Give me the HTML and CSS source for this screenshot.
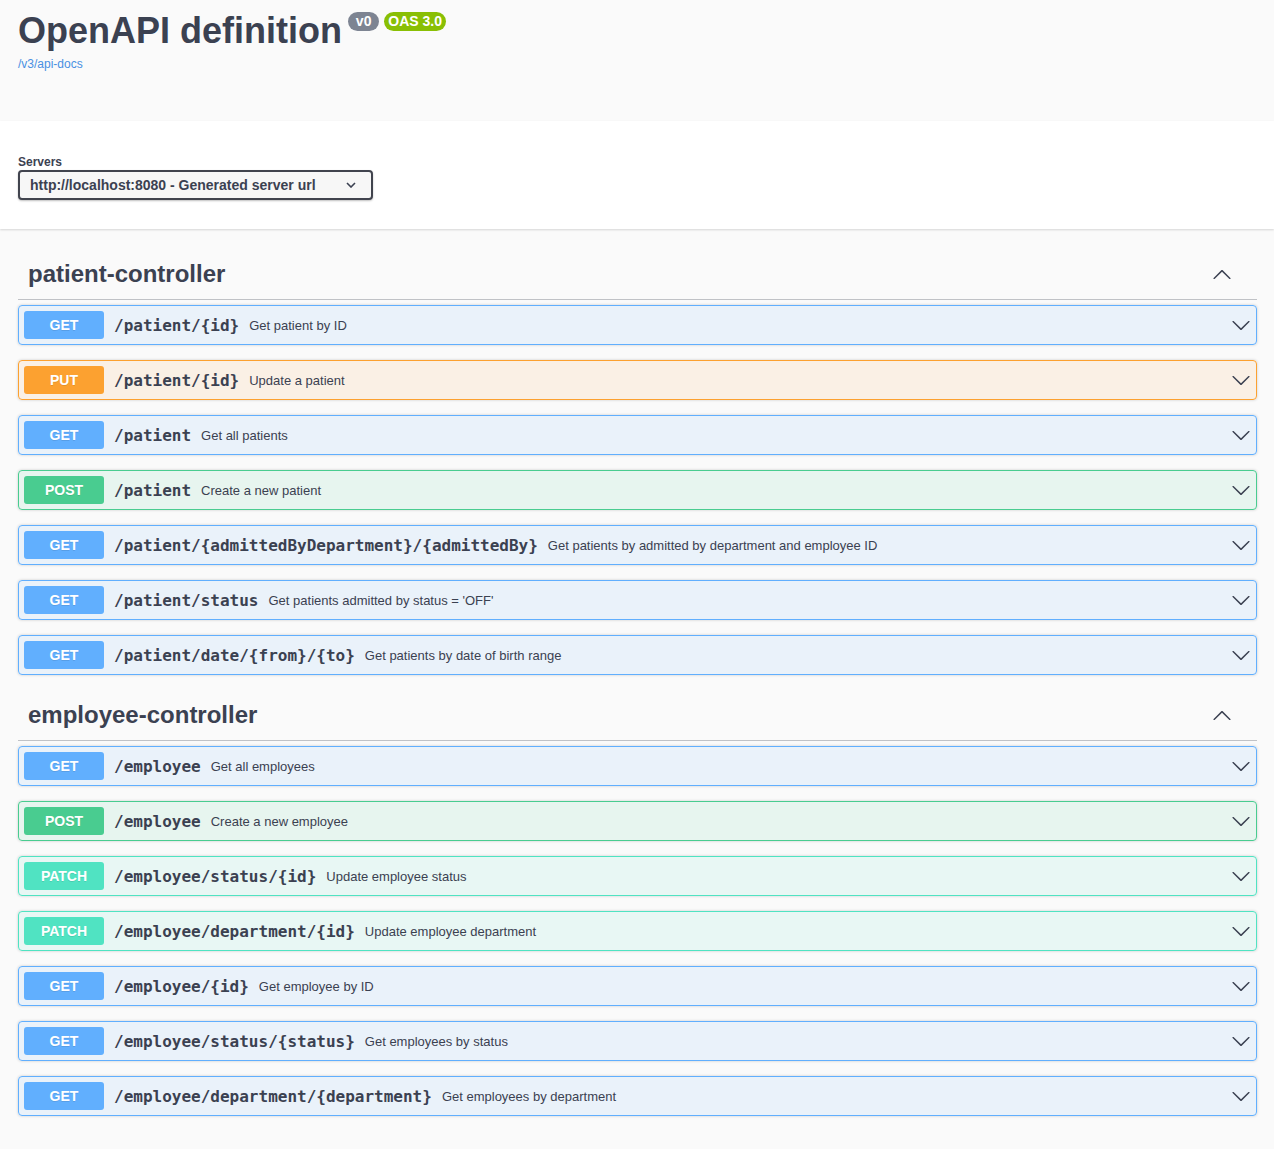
FILE: index.html
```html
<!DOCTYPE html>
<html lang="en">
<head>
<meta charset="utf-8">
<title>Swagger UI</title>
<link rel="stylesheet" href="styles.css">
</head>
<body>
<div class="swagger">
  <header class="info">
    <div class="title-row">
      <h1 class="title">OpenAPI definition</h1>
      <span class="badge badge-version"> v0 </span>
      <span class="badge badge-oas">OAS 3.0</span>
    </div>
    <a class="spec-link" href="#">/v3/api-docs</a>
  </header>

  <section class="scheme">
    <div class="servers">
      <span class="servers-title">Servers</span>
      <div class="select">
        <span>http://localhost:8080 - Generated server url</span>
        <svg class="select-arrow" width="10" height="6" viewBox="0 0 10 6"><polyline points="1,1 5,5 9,1" fill="none" stroke="#3b4151" stroke-width="1.6"/></svg>
      </div>
    </div>
  </section>

  <main class="ops">
    <section class="tag-section">
      <h3 class="tag"><span>patient-controller</span>
        <svg class="tag-arrow" width="20" height="20" viewBox="0 0 20 20"><path d="M17.418 14.908c.272.268.709.268.979 0s.271-.701 0-.969l-7.908-7.83c-.27-.268-.707-.268-.979 0l-7.908 7.83c-.27.268-.27.701 0 .969.271.268.709.268.979 0L10 7.767l7.418 7.141z"/></svg>
      </h3>
      <div class="opblock get"><span class="method">GET</span><span class="path">/patient/{id}</span><span class="desc">Get patient by ID</span><svg class="arrow" width="20" height="20" viewBox="0 0 20 20"><path d="M17.418 6.109c.272-.268.709-.268.979 0s.271.701 0 .969l-7.908 7.83c-.27.268-.707.268-.979 0l-7.908-7.83c-.27-.268-.27-.701 0-.969.271-.268.709-.268.979 0L10 13.25l7.418-7.141z"/></svg></div>
      <div class="opblock put"><span class="method">PUT</span><span class="path">/patient/{id}</span><span class="desc">Update a patient</span><svg class="arrow" width="20" height="20" viewBox="0 0 20 20"><path d="M17.418 6.109c.272-.268.709-.268.979 0s.271.701 0 .969l-7.908 7.83c-.27.268-.707.268-.979 0l-7.908-7.83c-.27-.268-.27-.701 0-.969.271-.268.709-.268.979 0L10 13.25l7.418-7.141z"/></svg></div>
      <div class="opblock get"><span class="method">GET</span><span class="path">/patient</span><span class="desc">Get all patients</span><svg class="arrow" width="20" height="20" viewBox="0 0 20 20"><path d="M17.418 6.109c.272-.268.709-.268.979 0s.271.701 0 .969l-7.908 7.83c-.27.268-.707.268-.979 0l-7.908-7.83c-.27-.268-.27-.701 0-.969.271-.268.709-.268.979 0L10 13.25l7.418-7.141z"/></svg></div>
      <div class="opblock post"><span class="method">POST</span><span class="path">/patient</span><span class="desc">Create a new patient</span><svg class="arrow" width="20" height="20" viewBox="0 0 20 20"><path d="M17.418 6.109c.272-.268.709-.268.979 0s.271.701 0 .969l-7.908 7.83c-.27.268-.707.268-.979 0l-7.908-7.83c-.27-.268-.27-.701 0-.969.271-.268.709-.268.979 0L10 13.25l7.418-7.141z"/></svg></div>
      <div class="opblock get"><span class="method">GET</span><span class="path">/patient/{admittedByDepartment}/{admittedBy}</span><span class="desc">Get patients by admitted by department and employee ID</span><svg class="arrow" width="20" height="20" viewBox="0 0 20 20"><path d="M17.418 6.109c.272-.268.709-.268.979 0s.271.701 0 .969l-7.908 7.83c-.27.268-.707.268-.979 0l-7.908-7.83c-.27-.268-.27-.701 0-.969.271-.268.709-.268.979 0L10 13.25l7.418-7.141z"/></svg></div>
      <div class="opblock get"><span class="method">GET</span><span class="path">/patient/status</span><span class="desc">Get patients admitted by status = 'OFF'</span><svg class="arrow" width="20" height="20" viewBox="0 0 20 20"><path d="M17.418 6.109c.272-.268.709-.268.979 0s.271.701 0 .969l-7.908 7.83c-.27.268-.707.268-.979 0l-7.908-7.83c-.27-.268-.27-.701 0-.969.271-.268.709-.268.979 0L10 13.25l7.418-7.141z"/></svg></div>
      <div class="opblock get"><span class="method">GET</span><span class="path">/patient/date/{from}/{to}</span><span class="desc">Get patients by date of birth range</span><svg class="arrow" width="20" height="20" viewBox="0 0 20 20"><path d="M17.418 6.109c.272-.268.709-.268.979 0s.271.701 0 .969l-7.908 7.83c-.27.268-.707.268-.979 0l-7.908-7.83c-.27-.268-.27-.701 0-.969.271-.268.709-.268.979 0L10 13.25l7.418-7.141z"/></svg></div>
    </section>

    <section class="tag-section">
      <h3 class="tag"><span>employee-controller</span>
        <svg class="tag-arrow" width="20" height="20" viewBox="0 0 20 20"><path d="M17.418 14.908c.272.268.709.268.979 0s.271-.701 0-.969l-7.908-7.83c-.27-.268-.707-.268-.979 0l-7.908 7.83c-.27.268-.27.701 0 .969.271.268.709.268.979 0L10 7.767l7.418 7.141z"/></svg>
      </h3>
      <div class="opblock get"><span class="method">GET</span><span class="path">/employee</span><span class="desc">Get all employees</span><svg class="arrow" width="20" height="20" viewBox="0 0 20 20"><path d="M17.418 6.109c.272-.268.709-.268.979 0s.271.701 0 .969l-7.908 7.83c-.27.268-.707.268-.979 0l-7.908-7.83c-.27-.268-.27-.701 0-.969.271-.268.709-.268.979 0L10 13.25l7.418-7.141z"/></svg></div>
      <div class="opblock post"><span class="method">POST</span><span class="path">/employee</span><span class="desc">Create a new employee</span><svg class="arrow" width="20" height="20" viewBox="0 0 20 20"><path d="M17.418 6.109c.272-.268.709-.268.979 0s.271.701 0 .969l-7.908 7.83c-.27.268-.707.268-.979 0l-7.908-7.83c-.27-.268-.27-.701 0-.969.271-.268.709-.268.979 0L10 13.25l7.418-7.141z"/></svg></div>
      <div class="opblock patch"><span class="method">PATCH</span><span class="path">/employee/status/{id}</span><span class="desc">Update employee status</span><svg class="arrow" width="20" height="20" viewBox="0 0 20 20"><path d="M17.418 6.109c.272-.268.709-.268.979 0s.271.701 0 .969l-7.908 7.83c-.27.268-.707.268-.979 0l-7.908-7.83c-.27-.268-.27-.701 0-.969.271-.268.709-.268.979 0L10 13.25l7.418-7.141z"/></svg></div>
      <div class="opblock patch"><span class="method">PATCH</span><span class="path">/employee/department/{id}</span><span class="desc">Update employee department</span><svg class="arrow" width="20" height="20" viewBox="0 0 20 20"><path d="M17.418 6.109c.272-.268.709-.268.979 0s.271.701 0 .969l-7.908 7.83c-.27.268-.707.268-.979 0l-7.908-7.83c-.27-.268-.27-.701 0-.969.271-.268.709-.268.979 0L10 13.25l7.418-7.141z"/></svg></div>
      <div class="opblock get"><span class="method">GET</span><span class="path">/employee/{id}</span><span class="desc">Get employee by ID</span><svg class="arrow" width="20" height="20" viewBox="0 0 20 20"><path d="M17.418 6.109c.272-.268.709-.268.979 0s.271.701 0 .969l-7.908 7.83c-.27.268-.707.268-.979 0l-7.908-7.83c-.27-.268-.27-.701 0-.969.271-.268.709-.268.979 0L10 13.25l7.418-7.141z"/></svg></div>
      <div class="opblock get"><span class="method">GET</span><span class="path">/employee/status/{status}</span><span class="desc">Get employees by status</span><svg class="arrow" width="20" height="20" viewBox="0 0 20 20"><path d="M17.418 6.109c.272-.268.709-.268.979 0s.271.701 0 .969l-7.908 7.83c-.27.268-.707.268-.979 0l-7.908-7.83c-.27-.268-.27-.701 0-.969.271-.268.709-.268.979 0L10 13.25l7.418-7.141z"/></svg></div>
      <div class="opblock get"><span class="method">GET</span><span class="path">/employee/department/{department}</span><span class="desc">Get employees by department</span><svg class="arrow" width="20" height="20" viewBox="0 0 20 20"><path d="M17.418 6.109c.272-.268.709-.268.979 0s.271.701 0 .969l-7.908 7.83c-.27.268-.707.268-.979 0l-7.908-7.83c-.27-.268-.27-.701 0-.969.271-.268.709-.268.979 0L10 13.25l7.418-7.141z"/></svg></div>
    </section>
  </main>
</div>
</body>
</html>
```

FILE: styles.css
```css
* { box-sizing: border-box; }

html, body {
  margin: 0;
  padding: 0;
  background: #fafafa;
}

body {
  font-family: "Liberation Sans", Arial, sans-serif;
  color: #3b4151;
}

.info {
  height: 121px;
  padding: 10px 18px 0;
  background: #fafafa;
}

.title-row {
  display: flex;
  align-items: flex-start;
}

.title {
  margin: 0;
  font-size: 36px;
  font-weight: 700;
  line-height: 41px;
  color: #3b4151;
}

.badge {
  margin: 2px 0 0 5px;
  padding: 2px 4px;
  border-radius: 57px;
  font-size: 14px;
  font-weight: 700;
  line-height: 15px;
  color: #fff;
  white-space: pre;
}

.badge-version { background: #7d8492; margin-left: 6px; }
.badge-oas { background: #89bf04; }

.spec-link {
  display: inline-block;
  margin-top: 6px;
  font-size: 12px;
  line-height: 14px;
  color: #4990e2;
  text-decoration: none;
}

.scheme {
  background: #fff;
  padding: 30px 18px 29px;
  margin-bottom: 20px;
  box-shadow: 0 1px 2px 0 rgba(0, 0, 0, 0.15);
}

.servers {
  display: flex;
  flex-direction: column;
  align-items: flex-start;
}

.servers-title {
  font-size: 12px;
  font-weight: 700;
  line-height: 15px;
  margin-top: 4px;
}

.select {
  width: 355px;
  height: 30px;
  display: flex;
  align-items: center;
  justify-content: space-between;
  padding: 0 15px 0 10px;
  border: 2px solid #41444e;
  border-radius: 4px;
  background: #f7f7f7;
  box-shadow: 0 1px 2px 0 rgba(0, 0, 0, 0.25);
  font-size: 14px;
  font-weight: 700;
  color: #3b4151;
}

.ops {
  padding: 0 17px 20px 18px;
}

.tag-section {
  display: flex;
  flex-direction: column;
}

.tag {
  display: flex;
  align-items: center;
  justify-content: space-between;
  height: 51px;
  margin: 0 0 5px;
  padding: 0 25px 0 10px;
  border-bottom: 1px solid rgba(59, 65, 81, 0.3);
  font-size: 24px;
  font-weight: 700;
  color: #3b4151;
}

.tag-arrow { fill: #3b4151; flex: none; }

.opblock {
  display: flex;
  align-items: center;
  height: 40px;
  margin: 0 0 15px;
  padding: 0 5px;
  border: 1px solid;
  border-radius: 4px;
  box-shadow: 0 0 3px rgba(0, 0, 0, 0.19);
}

.method {
  flex: none;
  width: 80px;
  height: 28px;
  line-height: 28px;
  border-radius: 3px;
  text-align: center;
  font-size: 14px;
  font-weight: 700;
  color: #fff;
  text-shadow: 0 1px 0 rgba(0, 0, 0, 0.1);
}

.path {
  padding: 0 10px;
  font-family: "DejaVu Sans Mono", "Liberation Mono", monospace;
  font-size: 16px;
  font-weight: 700;
  color: #3b4151;
}

.desc {
  flex: 1;
  font-size: 13px;
  color: #3b4151;
}

.arrow { flex: none; fill: #3b4151; }

.opblock.get { background: rgba(97, 175, 254, 0.1); border-color: #61affe; }
.opblock.get .method { background: #61affe; }
.opblock.put { background: rgba(252, 161, 48, 0.1); border-color: #fca130; }
.opblock.put .method { background: #fca130; }
.opblock.post { background: rgba(73, 204, 144, 0.1); border-color: #49cc90; }
.opblock.post .method { background: #49cc90; }
.opblock.patch { background: rgba(80, 227, 194, 0.1); border-color: #50e3c2; }
.opblock.patch .method { background: #50e3c2; }
```
